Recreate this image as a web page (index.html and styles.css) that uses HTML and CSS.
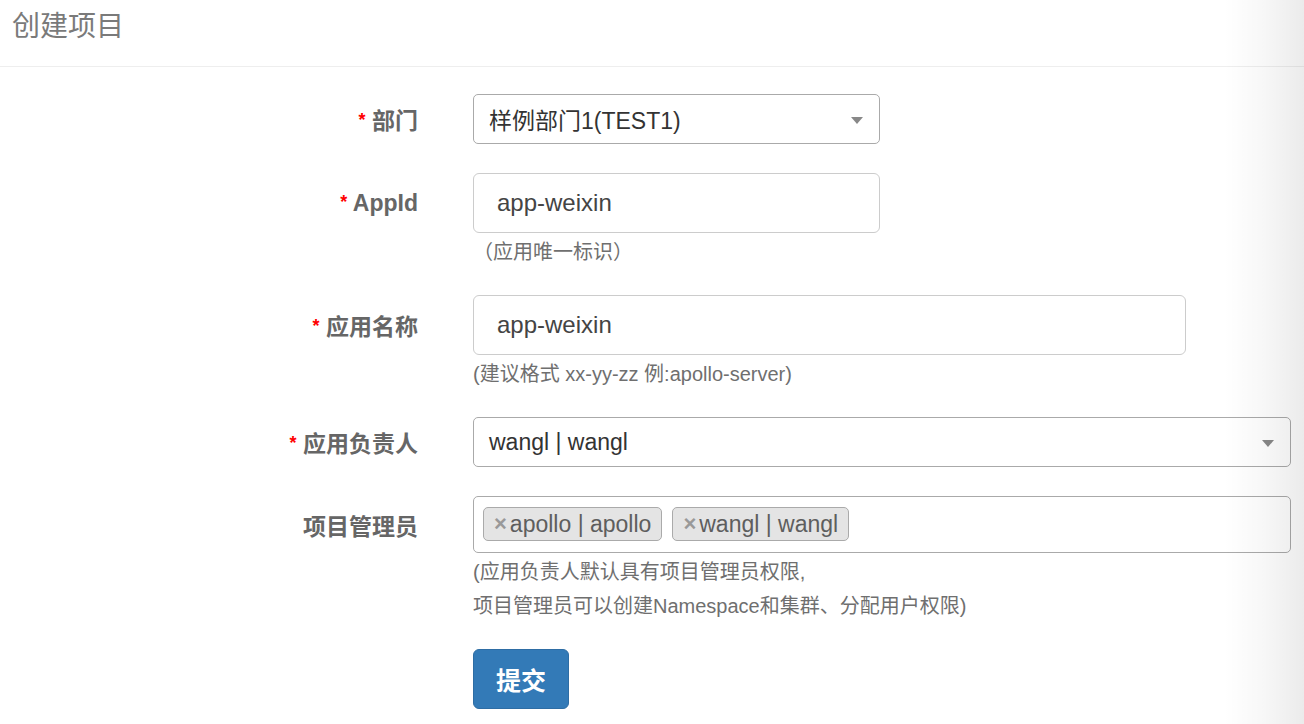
FILE: index.html
```html
<!DOCTYPE html>
<html lang="zh-CN">
<head>
<meta charset="utf-8">
<title>创建项目</title>
<link rel="stylesheet" href="styles.css">
</head>
<body>
<div class="page">
  <header class="page-header">
    <h1 class="title">创建项目</h1>
  </header>
  <form class="form">
    <div class="form-group">
      <label class="label"><span class="req">*</span> 部门</label>
      <div class="control">
        <div class="select w-short"><span class="select-text">样例部门1(TEST1)</span><span class="arrow"></span></div>
      </div>
    </div>
    <div class="form-group">
      <label class="label"><span class="req">*</span> AppId</label>
      <div class="control">
        <div class="input w-short">app-weixin</div>
      </div>
      <div class="help">（应用唯一标识）</div>
    </div>
    <div class="form-group">
      <label class="label"><span class="req">*</span> 应用名称</label>
      <div class="control">
        <div class="input w-medium">app-weixin</div>
      </div>
      <div class="help">(建议格式 xx-yy-zz 例:apollo-server)</div>
    </div>
    <div class="form-group">
      <label class="label"><span class="req">*</span> 应用负责人</label>
      <div class="control">
        <div class="select w-full"><span class="select-text">wangl | wangl</span><span class="arrow"></span></div>
      </div>
    </div>
    <div class="form-group">
      <label class="label">项目管理员</label>
      <div class="control">
        <div class="multi w-full">
          <span class="tag"><span class="tag-x">×</span>apollo | apollo</span>
          <span class="tag"><span class="tag-x">×</span>wangl | wangl</span>
        </div>
      </div>
      <div class="help">(应用负责人默认具有项目管理员权限,<br>项目管理员可以创建Namespace和集群、分配用户权限)</div>
    </div>
    <div class="form-group">
      <div class="control">
        <button type="button" class="btn">提交</button>
      </div>
    </div>
  </form>
  <div class="edge-shade"></div>
</div>
</body>
</html>
```

FILE: styles.css
```css
* { box-sizing: border-box; }

html, body {
  margin: 0;
  padding: 0;
  background: #fff;
}

body {
  font-family: "Liberation Sans", "Noto Sans CJK SC", sans-serif;
  color: #333;
  width: 1304px;
  height: 724px;
  overflow: hidden;
}

.page {
  position: relative;
  height: 724px;
}

.page-header {
  padding: 4px 12px 0;
  height: 67px;
  border-bottom: 1px solid #eeeeee;
}

.title {
  margin: 0;
  font-size: 28px;
  line-height: 40px;
  font-weight: 400;
  color: #7a7a7a;
  font-family: "Noto Sans CJK SC", sans-serif;
}

.form {
  padding: 27px 13px 0 0;
}

.form-group {
  display: grid;
  grid-template-columns: 418px 1fr;
  column-gap: 55px;
  margin-bottom: 29px;
}

.label {
  grid-column: 1;
  grid-row: 1;
  align-self: center;
  text-align: right;
  font-size: 23px;
  font-weight: 700;
  color: #666;
  white-space: nowrap;
}

.req {
  color: #ff0000;
  font-size: 18px;
  vertical-align: 3px;
}

.control {
  grid-column: 2;
  grid-row: 1;
}

.help {
  grid-column: 2;
  grid-row: 2;
  margin-top: 2px;
  margin-bottom: -3px;
  font-size: 20px;
  line-height: 34px;
  color: #6f6f6f;
}

.w-short { width: 407px; }
.w-medium { width: 713px; }
.w-full { width: 100%; }

.select {
  display: flex;
  align-items: center;
  justify-content: space-between;
  height: 50px;
  padding: 0 16px 0 15px;
  border: 1px solid #aaa;
  border-radius: 5px;
  background: #fff;
}

.select-text {
  font-size: 23px;
  color: #333;
}

.arrow {
  width: 0;
  height: 0;
  border-left: 6px solid transparent;
  border-right: 6px solid transparent;
  border-top: 7px solid #888;
  margin-top: 2px;
}

.input {
  height: 60px;
  padding: 0 23px;
  display: flex;
  align-items: center;
  border: 1px solid #ccc;
  border-radius: 6px;
  font-size: 24px;
  color: #444;
  background: #fff;
}

.multi {
  display: flex;
  gap: 10px;
  padding: 10px 9px 11px;
  border: 1px solid #aaa;
  border-radius: 5px;
  background: #fff;
}

.tag {
  display: inline-flex;
  align-items: center;
  height: 34px;
  padding: 0 10px 0 10px;
  background: #e4e4e4;
  border: 1px solid #aaa;
  border-radius: 5px;
  font-size: 23px;
  color: #5e5e5e;
}

.tag-x {
  font-size: 22px;
  font-weight: 700;
  color: #999;
  margin-right: 3px;
}

.btn {
  width: 96px;
  height: 60px;
  padding: 0;
  background: #337ab7;
  border: 1px solid #2e6da4;
  border-radius: 6px;
  color: #fff;
  font-family: "Noto Sans CJK SC", sans-serif;
  font-size: 25px;
  font-weight: 700;
}

.edge-shade {
  position: absolute;
  top: 0;
  right: 0;
  width: 80px;
  height: 100%;
  pointer-events: none;
  background: linear-gradient(to right, rgba(0,0,0,0) 0%, rgba(0,0,0,0.03) 50%, rgba(0,0,0,0.08) 100%);
}
```
